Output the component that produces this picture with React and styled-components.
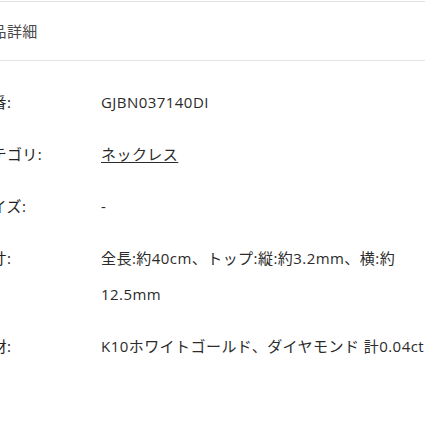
import React from 'react';
import styled, { createGlobalStyle } from 'styled-components';

const GlobalStyle = createGlobalStyle`
  html, body {
    margin: 0;
    padding: 0;
    background: #fff;
    overflow: hidden;
  }
  body {
    font-family: 'Open Sans', 'Noto Sans CJK JP', sans-serif;
    color: #333;
  }
`;

const Section = styled.section`
  margin: 1px 0 0 -24px;
  width: 470px;
`;

const SectionTitle = styled.h2`
  margin: 0;
  height: 58px;
  line-height: 58px;
  border-top: 1px solid #e2e2e2;
  border-bottom: 1px solid #e2e2e2;
  font-size: 15px;
  font-weight: 400;
  color: #4a4a4a;
  letter-spacing: 0.03em;
`;

const SpecList = styled.dl`
  margin: 0;
  padding: 15px 0 0;
`;

const SpecRow = styled.div`
  display: grid;
  grid-template-columns: 125px 342px;
  padding: 8px 0;
  font-size: 15px;
  line-height: 36px;
  letter-spacing: 0.03em;
`;

const Label = styled.dt`
  margin: 0;
  color: #222;
`;

const Value = styled.dd`
  margin: 0;
  color: #2b2b2b;
`;

const ValueLink = styled.a`
  color: #2b2b2b;
  text-decoration: underline;
  text-decoration-thickness: 1px;
  text-underline-offset: 2px;
`;

const specs = [
  { label: '品番:', value: 'GJBN037140DI' },
  { label: 'カテゴリ:', value: 'ネックレス', link: true },
  { label: 'サイズ:', value: '-' },
  { label: '実寸:', value: '全長:約40cm、トップ:縦:約3.2mm、横:約12.5mm' },
  { label: '素材:', value: 'K10ホワイトゴールド、ダイヤモンド 計0.04ct' },
];

export default function App() {
  return (
    <>
      <GlobalStyle />
      <Section>
        <SectionTitle>商品詳細</SectionTitle>
        <SpecList>
          {specs.map((s) => (
            <SpecRow key={s.label}>
              <Label>{s.label}</Label>
              <Value>
                {s.link ? <ValueLink href="#">{s.value}</ValueLink> : s.value}
              </Value>
            </SpecRow>
          ))}
        </SpecList>
      </Section>
    </>
  );
}
